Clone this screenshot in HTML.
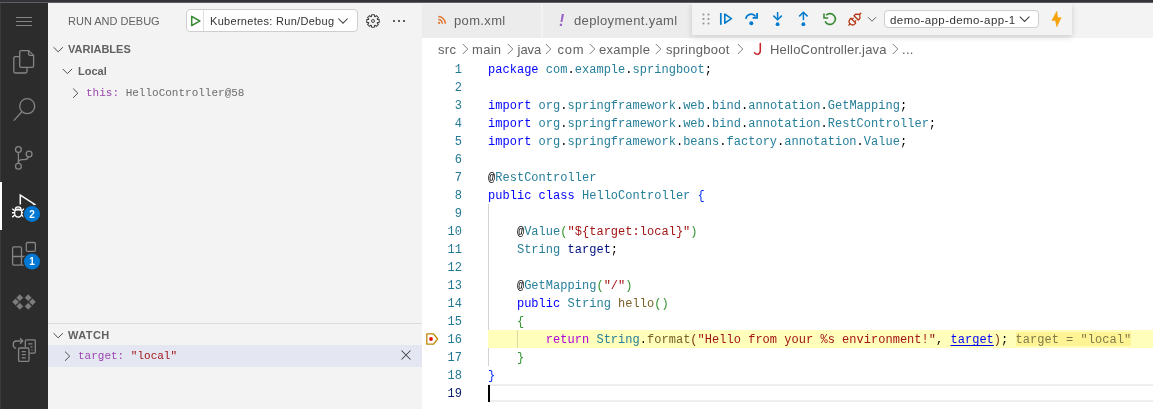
<!DOCTYPE html>
<html><head><meta charset="utf-8">
<style>body>*{will-change:transform}
*{margin:0;padding:0;box-sizing:border-box}
html,body{width:1153px;height:409px;overflow:hidden;background:#fff;font-family:"Liberation Sans",sans-serif}
.abs{position:absolute}
#top{left:0;top:0;width:1153px;height:3px;background:linear-gradient(#333438 0,#333438 2px,#5e5f63 2px,#5e5f63 3px)}
#act{left:0;top:3px;width:48px;height:406px;background:#2c2c2c}
#side{left:48px;top:3px;width:374px;height:406px;background:#f3f3f3}
#tabs{left:422px;top:3px;width:731px;height:35px;background:#f3f3f3}
.tab{top:1px;height:34px;background:#ececec}
.sans{font-family:"Liberation Sans",sans-serif}
.mono{font-family:"Liberation Mono",monospace}
.code{left:488px;margin-top:1px;letter-spacing:0.024px;font-family:"Liberation Mono",monospace;font-size:12px;line-height:18px;white-space:pre;color:#000}
.ln{margin-top:1px;font-family:"Liberation Mono",monospace;font-size:12px;line-height:18px;color:#237893;text-align:right;width:60px;left:402px}
.k{color:#0000ff}.t{color:#267f99}.s{color:#a31515}.f{color:#795e26}.v{color:#001080}.p{color:#af00db}
.b1{color:#0431fa}.b2{color:#319331}.b3{color:#7b3814}.u{color:#0000ff;text-decoration:underline;text-underline-offset:2px}.iv{color:#807a4b}
</style></head><body>
<div class="abs" id="top"></div>
<div class="abs" id="act"></div>
<div class="abs" id="side"></div>
<div class="abs" id="tabs">
  <div class="abs tab" style="left:0;width:119px"></div>
  <div class="abs tab" style="left:121px;width:150px"></div>
</div>




<div id="deco">
<div class="abs" style="left:422px;top:38px;width:731px;height:371px;background:#fff"></div>

<div class="abs" style="left:488px;top:384px;width:665px;height:18px;border-top:2px solid #eeeeee;border-bottom:2px solid #eeeeee"></div>
<div class="abs" style="left:488px;top:204px;width:1px;height:162px;background:#d3d3d3"></div>
<div class="abs" style="left:488px;top:330px;width:665px;height:18px;background:#ffffbb"></div>
<div class="abs" style="left:517px;top:330px;width:1px;height:18px;background:#dcd9a6"></div>
<div class="abs" style="left:1016px;top:332px;width:115px;height:14px;background:#fff495"></div>
<div class="abs" style="left:488px;top:385px;width:2px;height:17px;background:#000"></div>
<svg class="abs" style="left:424px;top:331px" width="16" height="16" viewBox="0 0 16 16"><path d="M2.8 2.8 H9.6 L13.6 8 L9.6 13.2 H2.8 Z" fill="none" stroke="#be8700" stroke-width="1.3" stroke-linejoin="round"/><circle cx="7" cy="8" r="1.9" fill="#e51400"/></svg>
</div>
<svg class="abs" style="left:0;top:0" width="48" height="409" viewBox="0 0 48 409">
<rect x="0" y="3" width="1" height="406" fill="#3a3a3a"/>
<g stroke="#858585" stroke-width="1.1" fill="none">
<path d="M16 17.5H32M16 21.5H32M16 25.5H32"/>
</g>
<g stroke="#858585" stroke-width="1.3" fill="none" stroke-linejoin="round">
<path d="M19.7 52 Q19.7 50.6 21.1 50.6 H28.6 L33.6 55.4 V66 Q33.6 67.3 32.3 67.3 H21.1 Q19.7 67.3 19.7 66 Z"/>
<path d="M28.6 50.6 V54 Q28.6 55.4 30 55.4 H33.6"/>
<path d="M19.7 56.7 H15.2 Q13.8 56.7 13.8 58.1 V71.6 Q13.8 73 15.2 73 H25.6 Q27 73 27 71.6 V67.3"/>
<circle cx="27.2" cy="106.2" r="7.5"/>
<path d="M21.8 111.8 L13.8 120.6"/>
<circle cx="18.4" cy="149.5" r="2.9"/>
<circle cx="18.4" cy="166.2" r="2.9"/>
<circle cx="29.1" cy="154.1" r="2.9"/>
<path d="M18.4 152.4 V163.3"/>
<path d="M28.4 157 Q27.6 159.6 24.5 159.6 H22 Q18.4 159.8 18.4 163"/>
<rect x="12.6" y="246.9" width="8.9" height="18.2" rx="1.3"/>
<path d="M12.6 256.5 H30.5 V264 Q30.5 265.1 29.3 265.1 H21.5"/>
<rect x="26.3" y="242.5" width="9.1" height="8.9" rx="1.5"/>
</g>
<rect x="0" y="182" width="2" height="48" fill="#ffffff"/>
<g stroke="#ffffff" stroke-width="1.5" fill="none" stroke-linejoin="miter">
<path d="M20.3 204.6 V195.2 L34.8 204.4 L32 206.2"/>
</g>
<g fill="#7c7c7c" stroke="#2c2c2c" stroke-width="0.6">
<path d="M15.6 298.2 L19.3 301.9 L15.6 305.6 L11.9 301.9Z"/>
<path d="M19.8 294 L23.5 297.7 L19.8 301.4 L16.1 297.7Z"/>
<path d="M19.8 302.6 L23.5 306.3 L19.8 310 L16.1 306.3Z"/>
<path d="M28.2 294 L31.9 297.7 L28.2 301.4 L24.5 297.7Z"/>
<path d="M28.2 302.6 L31.9 306.3 L28.2 310 L24.5 306.3Z"/>
<path d="M32.5 298.2 L36.2 301.9 L32.5 305.6 L28.8 301.9Z"/>
</g>
<g stroke="#858585" stroke-width="1.3" fill="none" stroke-linejoin="round">
<path d="M25.3 347 V341 Q25.3 339.9 26.4 339.9 H34.2 Q35.3 339.9 35.3 341 V352 Q35.3 353.1 34.2 353.1 H29.3"/>
<path d="M28.2 343.8 H32.5M30.5 346.8 H32.5M31.5 349.8 H32.5"/>
<rect x="18.6" y="348" width="10.4" height="13.4" rx="1.2"/>
<path d="M21.8 351.6 H25.8M21.8 354.7 H25.8M21.8 357.8 H25.8"/>
<path d="M16.2 348.4 Q13.2 347.8 13.2 344.6 Q13.2 341 16.6 341 H22.6"/>
<path d="M20 338.2 L22.8 341 L20 343.8"/>
</g>
<g stroke="#ffffff" stroke-width="1.35" fill="none">
<path d="M15.4 209.4 Q15.4 206.9 18.2 206.9 Q21 206.9 21 209.4"/>
<ellipse cx="18.2" cy="213.1" rx="3.6" ry="4"/>
<path d="M14.7 209.9 H21.7"/>
<path d="M12.2 208.7 L14.7 210.7M12 212.7 H14.5M12.2 217.1 L14.7 215.1M24.2 208.7 L21.7 210.7M24.4 212.7 H21.9M24.2 217.1 L21.7 215.1"/>
</g>
<circle cx="32" cy="213.9" r="8.6" fill="#0078d4" stroke="#2c2c2c" stroke-width="1.2"/>
<circle cx="32" cy="261.6" r="8.6" fill="#0078d4" stroke="#2c2c2c" stroke-width="1.2"/>
<text x="32" y="217.6" fill="#fff" font-family="Liberation Sans" font-weight="bold" font-size="10" text-anchor="middle">2</text>
<text x="32" y="265.3" fill="#fff" font-family="Liberation Sans" font-weight="bold" font-size="10" text-anchor="middle">1</text>
</svg>
<div id="sidebar">
<div class="abs sans" style="left:68px;top:15px;font-size:11px;line-height:13px;color:#616161;white-space:nowrap">RUN AND DEBUG</div>
<div class="abs" style="left:186px;top:9px;width:172px;height:23px;border:1px solid #cecece;border-radius:4px;background:#fff"></div>
<div class="abs" style="left:203px;top:10px;width:1px;height:21px;background:#dedede"></div>
<svg class="abs" style="left:189px;top:14px" width="14" height="14" viewBox="0 0 14 14"><path d="M2.7 2.3 L10.8 7 L2.7 11.7 Z" fill="none" stroke="#388a34" stroke-width="1.5" stroke-linejoin="round"/></svg>
<div class="abs sans" style="left:210px;top:13px;font-size:11px;line-height:16px;color:#333;white-space:nowrap;letter-spacing:0.3px">Kubernetes: Run/Debug</div>
<svg class="abs" style="left:337px;top:17px" width="12" height="8" viewBox="0 0 12 8"><path d="M1.3 1.5 L6 6.2 L10.7 1.5" fill="none" stroke="#424242" stroke-width="1.05"/></svg>
<svg class="abs" style="left:365px;top:13px" width="16" height="16" viewBox="0 0 16 16"><path fill="none" stroke="#424242" stroke-width="1.05" stroke-linejoin="round" d="M6.47 3.56 L6.56 1.76 L9.44 1.76 L9.53 3.56 L10.06 3.78 L11.39 2.57 L13.43 4.61 L12.22 5.94 L12.44 6.47 L14.24 6.56 L14.24 9.44 L12.44 9.53 L12.22 10.06 L13.43 11.39 L11.39 13.43 L10.06 12.22 L9.53 12.44 L9.44 14.24 L6.56 14.24 L6.47 12.44 L5.94 12.22 L4.61 13.43 L2.57 11.39 L3.78 10.06 L3.56 9.53 L1.76 9.44 L1.76 6.56 L3.56 6.47 L3.78 5.94 L2.57 4.61 L4.61 2.57 L5.94 3.78Z"/><circle cx="8" cy="8" r="1.5" fill="none" stroke="#424242" stroke-width="1"/></svg>
<svg class="abs" style="left:392px;top:19px" width="14" height="4" viewBox="0 0 14 4"><rect x="1" y="1" width="2" height="2" fill="#5c5c5c"/><rect x="6" y="1" width="2" height="2" fill="#5c5c5c"/><rect x="11" y="1" width="2" height="2" fill="#5c5c5c"/></svg>

<svg class="abs" style="left:52px;top:44px" width="12" height="10" viewBox="0 0 12 10"><path d="M1.5 3.2 L6.2 7.8 L10.9 3.2" fill="none" stroke="#444" stroke-width="0.95"/></svg>
<div class="abs sans" style="left:68px;top:43px;font-size:11px;line-height:13px;color:#616161;font-weight:bold;white-space:nowrap">VARIABLES</div>
<svg class="abs" style="left:62px;top:66px" width="11" height="10" viewBox="0 0 11 10"><path d="M0.7 2.9 L5.4 7.6 L10.1 2.9" fill="none" stroke="#444" stroke-width="0.95"/></svg>
<div class="abs sans" style="left:78px;top:65px;font-size:11px;line-height:13px;color:#616161;font-weight:bold;white-space:nowrap">Local</div>
<svg class="abs" style="left:72px;top:87px" width="8" height="12" viewBox="0 0 8 12"><path d="M1.2 1.6 L5.8 6.2 L1.2 10.8" fill="none" stroke="#444" stroke-width="0.95"/></svg>
<div class="abs mono" style="left:86px;top:87px;font-size:11px;line-height:13px;white-space:pre"><span style="color:#9b46b0">this:</span> <span style="color:#6c6c6c">HelloController@58</span></div>

<div class="abs" style="left:48px;top:323px;width:374px;height:1px;background:#dcdcdc"></div>
<svg class="abs" style="left:52px;top:331px" width="12" height="10" viewBox="0 0 12 10"><path d="M1.5 2.2 L6.2 6.8 L10.9 2.2" fill="none" stroke="#444" stroke-width="0.95"/></svg>
<div class="abs sans" style="left:68px;top:329px;font-size:11px;line-height:13px;color:#616161;font-weight:bold;white-space:nowrap;letter-spacing:0.45px">WATCH</div>
<div class="abs" style="left:48px;top:345px;width:374px;height:22px;background:#e4e6f1"></div>
<svg class="abs" style="left:64px;top:350px" width="8" height="12" viewBox="0 0 8 12"><path d="M1 1.6 L5.7 6.2 L1 10.8" fill="none" stroke="#444" stroke-width="0.95"/></svg>
<div class="abs mono" style="left:78px;top:350px;font-size:11px;line-height:13px;white-space:pre"><span style="color:#9b46b0">target:</span> <span style="color:#a31515">"local"</span></div>
<svg class="abs" style="left:400px;top:349px" width="12" height="12" viewBox="0 0 12 12"><path d="M1.5 1.5 L10.5 10.5 M10.5 1.5 L1.5 10.5" fill="none" stroke="#424242" stroke-width="1.05"/></svg>
</div>
<svg class="abs" style="left:437px;top:15px" width="10" height="10" viewBox="0 0 10 10"><circle cx="2.1" cy="7.9" r="1.15" fill="#e37933"/><path d="M1.3 4.6 A4.1 4.1 0 0 1 5.4 8.7" stroke="#e37933" stroke-width="1.5" fill="none"/><path d="M1.3 1.6 A7.1 7.1 0 0 1 8.4 8.7" stroke="#e37933" stroke-width="1.5" fill="none"/></svg>
<div class="abs sans" style="left:454px;top:13px;font-size:13px;line-height:16px;color:#616161;white-space:nowrap;letter-spacing:0.35px">pom.xml</div>
<div class="abs sans" style="left:559px;top:12px;font-size:16px;line-height:17px;color:#9a63c9;font-style:italic;font-weight:bold">!</div>
<div class="abs sans" style="left:574px;top:13px;font-size:13px;line-height:16px;color:#616161;white-space:nowrap;letter-spacing:0.35px">deployment.yaml</div>

<div id="crumbs" class="sans" style="font-size:13px;line-height:16px;color:#616161;letter-spacing:0.3px">
<div class="abs" style="left:438px;top:42px">src</div>
<div class="abs" style="left:472px;top:42px">main</div>
<div class="abs" style="left:517.5px;top:42px;letter-spacing:0">java</div>
<div class="abs" style="left:557.5px;top:42px;letter-spacing:0.8px">com</div>
<div class="abs" style="left:599px;top:42px">example</div>
<div class="abs" style="left:666px;top:42px">springboot</div>
<div class="abs" style="left:770px;top:42px;letter-spacing:0.2px">HelloController.java</div>
<div class="abs" style="left:902px;top:42px">...</div>
<svg class="abs" style="left:462px;top:43px" width="7" height="12" viewBox="0 0 7 12"><path d="M0.8 1 L5.8 6 L0.8 11" fill="none" stroke="#777" stroke-width="0.95"/></svg>
<svg class="abs" style="left:507px;top:43px" width="7" height="12" viewBox="0 0 7 12"><path d="M0.8 1 L5.8 6 L0.8 11" fill="none" stroke="#777" stroke-width="0.95"/></svg>
<svg class="abs" style="left:545px;top:43px" width="7" height="12" viewBox="0 0 7 12"><path d="M0.8 1 L5.8 6 L0.8 11" fill="none" stroke="#777" stroke-width="0.95"/></svg>
<svg class="abs" style="left:589px;top:43px" width="7" height="12" viewBox="0 0 7 12"><path d="M0.8 1 L5.8 6 L0.8 11" fill="none" stroke="#777" stroke-width="0.95"/></svg>
<svg class="abs" style="left:655px;top:43px" width="7" height="12" viewBox="0 0 7 12"><path d="M0.8 1 L5.8 6 L0.8 11" fill="none" stroke="#777" stroke-width="0.95"/></svg>
<svg class="abs" style="left:737px;top:43px" width="7" height="12" viewBox="0 0 7 12"><path d="M0.8 1 L5.8 6 L0.8 11" fill="none" stroke="#777" stroke-width="0.95"/></svg>
<svg class="abs" style="left:892px;top:43px" width="7" height="12" viewBox="0 0 7 12"><path d="M0.8 1 L5.8 6 L0.8 11" fill="none" stroke="#777" stroke-width="0.95"/></svg>
<svg class="abs" style="left:752px;top:42px" width="12" height="14" viewBox="0 0 12 14"><path d="M8.3 1.6 V8.6 Q8.3 12.2 5.3 12.2 Q3.4 12.2 2.6 10.8" fill="none" stroke="#c5282f" stroke-width="1.6" stroke-linecap="round"/></svg>
</div>

<div id="dbg">
<div class="abs" style="left:692px;top:3px;width:380px;height:32px;background:#f3f3f3;box-shadow:0 2px 6px rgba(0,0,0,0.16)"></div>
<svg class="abs" style="left:700px;top:11px" width="12" height="16" viewBox="0 0 12 16"><g fill="#909090"><rect x="2.6" y="2.6" width="1.8" height="1.8"/><rect x="7.6" y="2.6" width="1.8" height="1.8"/><rect x="2.6" y="7.1" width="1.8" height="1.8"/><rect x="7.6" y="7.1" width="1.8" height="1.8"/><rect x="2.6" y="11.6" width="1.8" height="1.8"/><rect x="7.6" y="11.6" width="1.8" height="1.8"/></g></svg>
<svg class="abs" style="left:718px;top:11px" width="16" height="16" viewBox="0 0 16 16"><path d="M2.8 2 V13.8" stroke="#007acc" stroke-width="1.7"/><path d="M6.8 3.1 L13.4 7.6 L6.8 12.2 Z" fill="none" stroke="#007acc" stroke-width="1.6" stroke-linejoin="round"/></svg>
<svg class="abs" style="left:743px;top:11px" width="16" height="16" viewBox="0 0 16 16"><path d="M2.9 7.9 A5.3 5.3 0 0 1 12.6 5.5" fill="none" stroke="#007acc" stroke-width="1.8"/><path d="M14.1 2 V6.8 H9.6" fill="none" stroke="#007acc" stroke-width="1.8"/><circle cx="8.3" cy="12.2" r="2" fill="#007acc"/></svg>
<svg class="abs" style="left:769px;top:10px" width="16" height="16" viewBox="0 0 16 16"><path d="M8.6 2 V9.4" stroke="#007acc" stroke-width="1.5"/><path d="M4.4 5.6 L8.6 9.7 L12.8 5.6" fill="none" stroke="#007acc" stroke-width="1.5"/><circle cx="8.6" cy="14.2" r="1.9" fill="#007acc"/></svg>
<svg class="abs" style="left:795px;top:10px" width="16" height="16" viewBox="0 0 16 16"><path d="M8.4 2.6 V10.1" stroke="#007acc" stroke-width="1.5"/><path d="M4.2 6.4 L8.4 2.3 L12.6 6.4" fill="none" stroke="#007acc" stroke-width="1.5"/><circle cx="8.4" cy="14.2" r="1.9" fill="#007acc"/></svg>
<svg class="abs" style="left:821px;top:10px" width="16" height="16" viewBox="0 0 16 16"><path d="M5.18 5.18 A5.4 5.4 0 1 1 4.1 11.3" fill="none" stroke="#388a34" stroke-width="1.6"/><path d="M3 3.6 V8 H7.2" fill="none" stroke="#388a34" stroke-width="1.6"/></svg>
<svg class="abs" style="left:847px;top:11px" width="16" height="16" viewBox="0 0 16 16"><g transform="rotate(-45 8 8)" fill="none" stroke="#b5300d" stroke-width="1.2" stroke-linejoin="round"><path d="M-1.2 8 H1.6"/><path d="M5.6 4.6 V11.4 H4.6 A3.4 3.4 0 0 1 4.6 4.6 Z"/><path d="M5.6 6.2 H7.8 M5.6 9.8 H7.8"/><path d="M9.6 5 H12 L14.6 8 L12 11 H9.6 Z"/><path d="M14.6 8 H16.8"/></g></svg>
<svg class="abs" style="left:867px;top:16px" width="10" height="7" viewBox="0 0 10 7"><path d="M1 1.2 L5 5.2 L9 1.2" fill="none" stroke="#616161" stroke-width="1"/></svg>
<div class="abs" style="left:884px;top:10px;width:155px;height:18px;border:1px solid #cecece;border-radius:4px;background:#fff"></div>
<div class="abs sans" style="left:890px;top:12px;font-size:11.5px;line-height:16px;color:#333;white-space:nowrap;letter-spacing:0.42px">demo-app-demo-app-1</div>
<svg class="abs" style="left:1018px;top:15px" width="14" height="9" viewBox="0 0 14 9"><path d="M1.8 1.6 L6.6 6.4 L11.4 1.6" fill="none" stroke="#424242" stroke-width="1.05"/></svg>
<svg class="abs" style="left:1049px;top:10px" width="16" height="18" viewBox="0 0 16 18"><path d="M7.8 1.3 L3 10.4 H6.6 L7.7 16.8 L12.1 7.7 H8.6 Z" fill="#f5a30a" stroke="#f5a30a" stroke-width="0.6" stroke-linejoin="round"/></svg>
</div>
<div id="editor">
<div class="abs ln" style="top:60px">1</div>
<div class="abs code" style="top:60px"><span class="k">package</span> <span class="t">com</span>.<span class="t">example</span>.<span class="t">springboot</span>;</div>
<div class="abs ln" style="top:78px">2</div>
<div class="abs code" style="top:78px"></div>
<div class="abs ln" style="top:96px">3</div>
<div class="abs code" style="top:96px"><span class="k">import</span> <span class="t">org</span>.<span class="t">springframework</span>.<span class="t">web</span>.<span class="t">bind</span>.<span class="t">annotation</span>.<span class="t">GetMapping</span>;</div>
<div class="abs ln" style="top:114px">4</div>
<div class="abs code" style="top:114px"><span class="k">import</span> <span class="t">org</span>.<span class="t">springframework</span>.<span class="t">web</span>.<span class="t">bind</span>.<span class="t">annotation</span>.<span class="t">RestController</span>;</div>
<div class="abs ln" style="top:132px">5</div>
<div class="abs code" style="top:132px"><span class="k">import</span> <span class="t">org</span>.<span class="t">springframework</span>.<span class="t">beans</span>.<span class="t">factory</span>.<span class="t">annotation</span>.<span class="t">Value</span>;</div>
<div class="abs ln" style="top:150px">6</div>
<div class="abs code" style="top:150px"></div>
<div class="abs ln" style="top:168px">7</div>
<div class="abs code" style="top:168px">@<span class="t">RestController</span></div>
<div class="abs ln" style="top:186px">8</div>
<div class="abs code" style="top:186px"><span class="k">public</span> <span class="k">class</span> <span class="t">HelloController</span> <span class="b1">{</span></div>
<div class="abs ln" style="top:204px">9</div>
<div class="abs code" style="top:204px"></div>
<div class="abs ln" style="top:222px">10</div>
<div class="abs code" style="top:222px">    @<span class="t">Value</span><span class="b2">(</span><span class="s">"${target:local}"</span><span class="b2">)</span></div>
<div class="abs ln" style="top:240px">11</div>
<div class="abs code" style="top:240px">    <span class="t">String</span> <span class="v">target</span>;</div>
<div class="abs ln" style="top:258px">12</div>
<div class="abs code" style="top:258px"></div>
<div class="abs ln" style="top:276px">13</div>
<div class="abs code" style="top:276px">    @<span class="t">GetMapping</span><span class="b2">(</span><span class="s">"/"</span><span class="b2">)</span></div>
<div class="abs ln" style="top:294px">14</div>
<div class="abs code" style="top:294px">    <span class="k">public</span> <span class="t">String</span> <span class="f">hello</span><span class="b2">()</span></div>
<div class="abs ln" style="top:312px">15</div>
<div class="abs code" style="top:312px">    <span class="b2">{</span></div>
<div class="abs ln" style="top:330px">16</div>
<div class="abs code" style="top:330px">        <span class="p">return</span> <span class="t">String</span>.<span class="f">format</span><span class="b3">(</span><span class="s">"Hello from your %s environment!"</span>, <span class="u">target</span><span class="b3">)</span>; <span class="iv">target = "local"</span></div>
<div class="abs ln" style="top:348px">17</div>
<div class="abs code" style="top:348px">    <span class="b2">}</span></div>
<div class="abs ln" style="top:366px">18</div>
<div class="abs code" style="top:366px"><span class="b1">}</span></div>
<div class="abs ln" style="top:384px;color:#0b216f">19</div>
<div class="abs code" style="top:384px"></div>
</div>
</body></html>
